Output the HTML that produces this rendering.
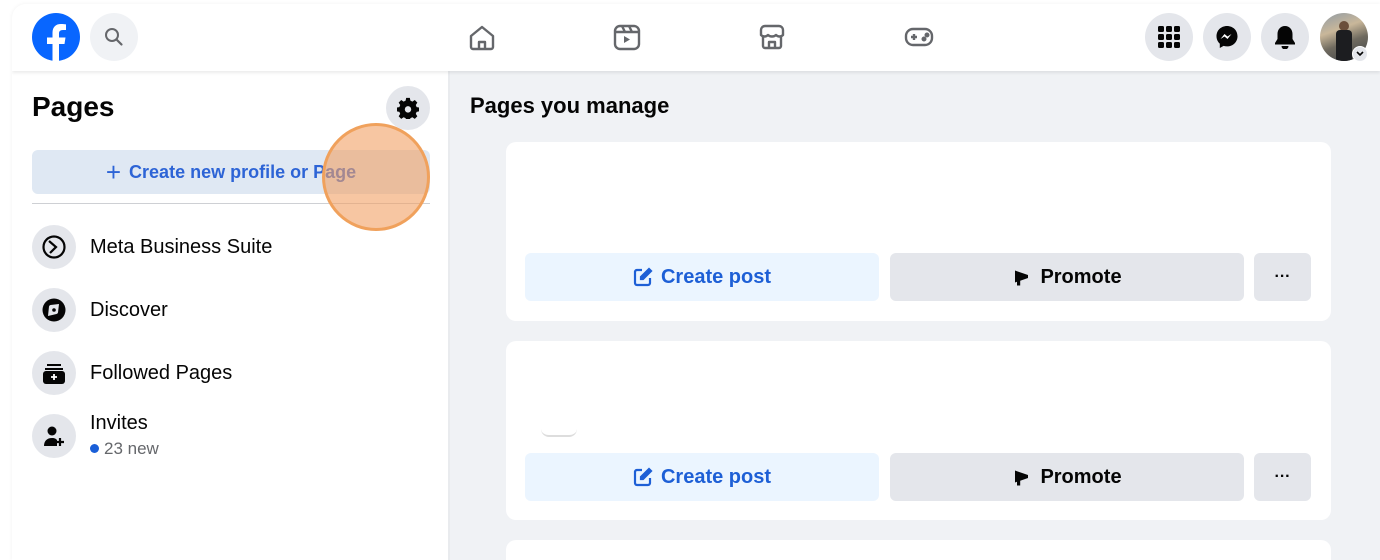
<!DOCTYPE html>
<html><head><meta charset="utf-8">
<style>
*{box-sizing:border-box;margin:0;padding:0}
html,body{width:1380px;height:560px;overflow:hidden}
body{background:#fff;font-family:"Liberation Sans",sans-serif;position:relative}
.frame{position:absolute;left:12px;top:4px;width:1368px;height:556px;border-radius:14px 0 0 0;background:#fff;box-shadow:0 0 4px rgba(0,0,0,.06);overflow:hidden}
.hdr{position:absolute;left:0;top:0;width:100%;height:67px;background:#fff;box-shadow:0 2px 3px rgba(0,0,0,.08);z-index:2}
.circ{position:absolute;border-radius:50%;background:#e4e6eb;display:flex;align-items:center;justify-content:center}
.left{position:absolute;left:0;top:67px;width:436px;height:489px;background:#fff}
.right{position:absolute;left:438px;top:67px;width:930px;height:489px;background:#f0f2f5;overflow:hidden}
.abs{position:absolute}
.card{position:absolute;left:56px;width:825px;background:#fff;border-radius:10px}
.btn{position:absolute;height:48px;border-radius:6px;display:flex;align-items:center;justify-content:center;font-size:20px;font-weight:bold}
.item{position:absolute;left:20px;display:flex;align-items:center}
.item .ic{width:44px;height:44px;border-radius:50%;background:#e4e6eb;display:flex;align-items:center;justify-content:center;margin-right:14px}
.item span{font-size:20px;color:#050505}
</style></head><body>
<div class="frame">
 <div class="hdr">
  <svg class="abs" style="left:20px;top:9px" width="48" height="48" viewBox="0 0 48 48"><circle cx="24" cy="24" r="24" fill="#0866ff"/><path d="M27 48V31h5.5l1-6.5H27v-4c0-2 1-3.5 4-3.5h3v-5.6c-1.2-.2-3-.4-5-.4-5.2 0-8.5 3-8.5 8.7v4.8H15V31h5.5v17z" fill="#fff"/></svg>
  <div class="circ" style="left:78px;top:9px;width:48px;height:48px;background:#f0f2f5"><svg width="20" height="20" viewBox="0 0 20 20"><circle cx="8" cy="8" r="6" fill="none" stroke="#65676b" stroke-width="2"/><path d="M12.5 12.5l5 5" stroke="#65676b" stroke-width="2.2" stroke-linecap="round"/></svg></div>
  <svg class="abs" style="left:456px;top:20px" width="28" height="28" viewBox="0 0 28 28" fill="none" stroke="#65676b" stroke-width="2.4" stroke-linejoin="round"><path d="M3 12L14 3l11 9v11a2 2 0 0 1-2 2H5a2 2 0 0 1-2-2z"/><path d="M11 25v-7h6v7"/></svg>
  <svg class="abs" style="left:601px;top:19px" width="28" height="28" viewBox="0 0 28 28" fill="none" stroke="#65676b" stroke-width="2.4"><rect x="2" y="3" width="24" height="23" rx="5"/><path d="M2 9h24M9 3l3 6M16 3l3 6"/><path d="M11 13l6 3.5-6 3.5z" fill="#65676b" stroke="none"/></svg>
  <svg class="abs" style="left:746px;top:19px" width="28" height="28" viewBox="0 0 28 28" fill="none" stroke="#65676b" stroke-width="2.4" stroke-linejoin="round"><path d="M3 7a4 4 0 0 1 4-4h14a4 4 0 0 1 4 4v5c-2 2-5 2-7 0-2 2-6 2-8 0-2 2-5 2-7 0z"/><path d="M5 13v10a2 2 0 0 0 2 2h14a2 2 0 0 0 2-2V13"/><path d="M11 25v-6h6v6"/></svg>
  <svg class="abs" style="left:892px;top:22px" width="30" height="22" viewBox="0 0 30 22" fill="none" stroke="#65676b" stroke-width="2.4"><rect x="2" y="3" width="26" height="16" rx="7"/><path d="M7 11h6M10 8v6"/><circle cx="20" cy="13" r="1.3" fill="#65676b"/><circle cx="23" cy="9" r="1.3" fill="#65676b"/></svg>
  <div class="circ" style="left:1133px;top:9px;width:48px;height:48px"><svg width="22" height="22" viewBox="0 0 22 22" fill="#050505"><rect x="0" y="0" width="6" height="6" rx="1.5"/><rect x="8" y="0" width="6" height="6" rx="1.5"/><rect x="16" y="0" width="6" height="6" rx="1.5"/><rect x="0" y="8" width="6" height="6" rx="1.5"/><rect x="8" y="8" width="6" height="6" rx="1.5"/><rect x="16" y="8" width="6" height="6" rx="1.5"/><rect x="0" y="16" width="6" height="6" rx="1.5"/><rect x="8" y="16" width="6" height="6" rx="1.5"/><rect x="16" y="16" width="6" height="6" rx="1.5"/></svg></div>
  <div class="circ" style="left:1191px;top:9px;width:48px;height:48px"><svg width="24" height="24" viewBox="0 0 24 24"><path d="M12 1C6 1 1.5 5.4 1.5 11.2c0 3 1.2 5.6 3.3 7.4V23l3.8-2.1c1.1.3 2.2.5 3.4.5 6 0 10.5-4.4 10.5-10.2S18 1 12 1z" fill="#050505"/><path d="M5.5 14l4-5 3 2.5 4-2.5-4 5-3-2.5z" fill="#fff"/></svg></div>
  <div class="circ" style="left:1249px;top:9px;width:48px;height:48px"><svg width="22" height="24" viewBox="0 0 22 24" fill="#050505"><path d="M11 1c-4.5 0-7.5 3.5-7.5 8v5L1 18v1.5h20V18l-2.5-4V9c0-4.5-3-8-7.5-8z"/><path d="M7.5 21a3.5 3.5 0 0 0 7 0z"/></svg></div>
  <div class="abs" style="left:1308px;top:9px;width:48px;height:48px;border-radius:50%;background:linear-gradient(160deg,#8f9aa5 0%,#c9b79a 35%,#6f6a5f 60%,#3d4146 100%);overflow:hidden"><div class="abs" style="left:19px;top:8px;width:10px;height:10px;border-radius:50%;background:#6b4f3a"></div><div class="abs" style="left:16px;top:17px;width:16px;height:31px;background:#1c1d20;border-radius:4px 4px 0 0"></div></div>
  <div class="circ" style="left:1340px;top:42px;width:16px;height:16px;background:#e4e6eb;border:1.5px solid #fff"><svg width="8" height="6" viewBox="0 0 8 6"><path d="M1 1l3 3 3-3" fill="none" stroke="#050505" stroke-width="1.6"/></svg></div>
 </div>
 <div class="left">
  <div class="abs" style="left:20px;top:20px;font-size:28px;font-weight:bold;color:#050505">Pages</div>
  <div class="circ" style="left:374px;top:15px;width:44px;height:44px"><svg width="22" height="22" viewBox="0 0 24 24"><path fill="#050505" d="M10 1h4l.6 3 2.2 1 2.6-1.7 2.8 2.8L20.5 8.7l.9 2.3 3 .6v4l-3 .6-.9 2.2 1.7 2.6-2.8 2.8-2.6-1.7-2.2.9-.6 3h-4l-.6-3-2.2-.9-2.6 1.7-2.8-2.8 1.7-2.6-.9-2.2-3-.6v-4l3-.6.9-2.3L1.8 6.1 4.6 3.3 7.2 5l2.2-1z"/><circle cx="12" cy="13.5" r="3.5" fill="#e4e6eb"/></svg></div>
  <div class="abs" style="left:20px;top:79px;width:398px;height:44px;border-radius:6px;background:#dfe8f3;display:flex;align-items:center;justify-content:center;font-size:18px;font-weight:bold;color:#2d64d6"><span style="font-size:26px;font-weight:normal;margin-right:8px;line-height:1">+</span>Create new profile or Page</div>
  <div class="abs" style="left:20px;top:132px;width:398px;height:1px;background:#ced0d4"></div>
  <div class="item" style="top:154px"><div class="ic"><svg width="26" height="26" viewBox="0 0 26 26" fill="none" stroke="#050505" stroke-width="2.2"><circle cx="13" cy="13" r="10.5"/><path d="M8 7l7 6-6 6"/></svg></div><span>Meta Business Suite</span></div>
  <div class="item" style="top:217px"><div class="ic"><svg width="26" height="26" viewBox="0 0 26 26"><circle cx="13" cy="13" r="11.5" fill="#050505"/><path d="M8 9.5a2 2 0 0 1 1.5-1.5L18 7l-1 8.5a2 2 0 0 1-1.5 1.5L7 19z" fill="#e4e6eb"/><circle cx="13" cy="13" r="1.8" fill="#050505"/></svg></div><span>Discover</span></div>
  <div class="item" style="top:280px"><div class="ic"><svg width="24" height="24" viewBox="0 0 24 24"><path d="M5 3h14v2H5zM3 7h18v2H3z" fill="#050505"/><rect x="1" y="10" width="22" height="13" rx="3" fill="#050505"/><path d="M12 13v6M9 16h6" stroke="#fff" stroke-width="1.8"/></svg></div><span>Followed Pages</span></div>
  <div class="item" style="top:343px;align-items:flex-start"><div class="ic"><svg width="24" height="24" viewBox="0 0 24 24" fill="#050505"><circle cx="10" cy="7" r="4.5"/><path d="M2 22c0-5 3-8 8-8 3 0 4 1 5 2v6z"/><path d="M18 14v8M14 18h8" stroke="#050505" stroke-width="2.2"/></svg></div><div><div style="font-size:20px;color:#050505;margin-top:-2px">Invites</div><div style="font-size:17px;color:#65676b;margin-top:4px"><span style="display:inline-block;width:9px;height:9px;border-radius:50%;background:#1a5fd8;margin-right:5px;vertical-align:1px"></span>23 new</div></div></div>
 </div>
 <div class="abs" style="left:436px;top:67px;width:2px;height:489px;background:#e9ebee"></div>
 <div class="right">
  <div class="abs" style="left:20px;top:22px;font-size:22px;font-weight:bold;color:#050505">Pages you manage</div>
  <div class="card" style="top:71px;height:179px">
   <div class="btn" style="left:19px;top:111px;width:354px;background:#ebf5ff;color:#1d5fd6"><svg width="20" height="20" viewBox="0 0 20 20" style="margin-right:8px" fill="none" stroke="#1d5fd6" stroke-width="2.2"><path d="M9 3H4a2 2 0 0 0-2 2v11a2 2 0 0 0 2 2h11a2 2 0 0 0 2-2v-5"/><path d="M16 2l2 2-8 8H8v-2z" fill="#1d5fd6"/></svg>Create post</div>
   <div class="btn" style="left:384px;top:111px;width:354px;background:#e4e6eb;color:#050505"><svg width="20" height="20" viewBox="0 0 20 20" style="margin-right:8px"><path d="M3 3.5v12l2-.7v3.7h3.2v-4.8L16 11V8L5 4.2z" fill="#050505"/></svg>Promote</div>
   <div class="btn" style="left:748px;top:111px;width:57px;background:#e4e6eb;color:#050505;font-size:16px">···</div>
  </div>
  <div class="card" style="top:270px;height:179px">
   <div class="abs" style="left:35px;top:88px;width:36px;height:8px;border-radius:0 0 18px 18px;border-bottom:2px solid #ddd"></div>
   <div class="btn" style="left:19px;top:112px;width:354px;background:#ebf5ff;color:#1d5fd6"><svg width="20" height="20" viewBox="0 0 20 20" style="margin-right:8px" fill="none" stroke="#1d5fd6" stroke-width="2.2"><path d="M9 3H4a2 2 0 0 0-2 2v11a2 2 0 0 0 2 2h11a2 2 0 0 0 2-2v-5"/><path d="M16 2l2 2-8 8H8v-2z" fill="#1d5fd6"/></svg>Create post</div>
   <div class="btn" style="left:384px;top:112px;width:354px;background:#e4e6eb;color:#050505"><svg width="20" height="20" viewBox="0 0 20 20" style="margin-right:8px"><path d="M3 3.5v12l2-.7v3.7h3.2v-4.8L16 11V8L5 4.2z" fill="#050505"/></svg>Promote</div>
   <div class="btn" style="left:748px;top:112px;width:57px;background:#e4e6eb;color:#050505;font-size:16px">···</div>
  </div>
  <div class="card" style="top:469px;height:60px"></div>
 </div>
 <div class="abs" style="left:310px;top:119px;width:108px;height:108px;border-radius:50%;background:rgba(242,160,100,.6);border:3px solid #f0a15c;z-index:3"></div>
</div>
</body></html>
